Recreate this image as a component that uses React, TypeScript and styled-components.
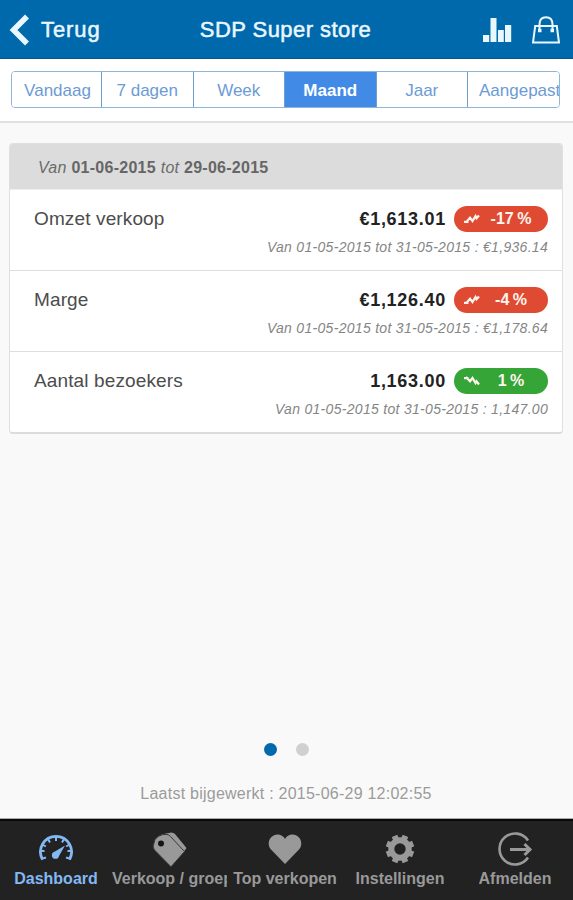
import React from 'react';
import styled, { createGlobalStyle } from 'styled-components';

const GlobalStyle = createGlobalStyle`
  *, *::before, *::after { box-sizing: border-box; }
  body { margin: 0; font-family: "Liberation Sans", Arial, sans-serif; background: #f9f9f9; }
`;

const Screen = styled.div`
  display: flex;
  flex-direction: column;
  height: 900px;
  width: 573px;
  overflow: hidden;
  background: #f9f9f9;
`;

const Header = styled.header`
  display: grid;
  grid-template-columns: 1fr auto 1fr;
  align-items: center;
  height: 59px;
  padding: 1px 13px 0 9px;
  background: #0069ab;
  border-bottom: 1px solid #07578a;
  color: #e9f7ff;
  flex: none;
`;

const BackButton = styled.button`
  display: flex;
  align-items: center;
  gap: 12px;
  padding: 0;
  border: 0;
  background: none;
  color: inherit;
  font: 22px "Liberation Sans", Arial, sans-serif;
  letter-spacing: 0.9px;
  -webkit-text-stroke: 0.5px currentColor;
`;

const Title = styled.h1`
  margin: 0 0 0 2px;
  font-size: 22px;
  font-weight: 400;
  letter-spacing: 0.44px;
  -webkit-text-stroke: 0.5px currentColor;
`;

const Actions = styled.div`
  display: flex;
  justify-content: flex-end;
  align-items: center;
  gap: 20px;
`;

const FilterBar = styled.div`
  height: 64px;
  flex: none;
  padding: 12px 13px 0 11px;
  background: #fff;
  border-bottom: 2px solid #e0e0e0;
`;

const Segments = styled.div`
  display: grid;
  grid-template-columns: 89px repeat(4, 91.5px) minmax(0, 1fr);
  height: 37px;
  border: 1px solid #8fb5d8;
  border-radius: 4px;
  overflow: hidden;
`;

const Segment = styled.button<{ $active?: boolean; $overflowing?: boolean }>`
  padding: 2px 0 0 ${p => (p.$overflowing ? '11px' : '0')};
  border: 0;
  border-left: 1px solid #6d9fd0;
  background: ${p => (p.$active ? '#418be6' : '#fff')};
  color: ${p => (p.$active ? '#fff' : '#6c9bd6')};
  font: ${p => (p.$active ? 700 : 400)} 17px "Liberation Sans", Arial, sans-serif;
  text-align: ${p => (p.$overflowing ? 'left' : 'center')};
  white-space: nowrap;
  overflow: hidden;
  &:first-child { border-left: 0; padding-left: 2px; }
`;

const Content = styled.main`
  display: flex;
  flex-direction: column;
  flex: 1;
  padding: 20px 10px 0 9px;
`;

const Card = styled.section`
  height: 291px;
  border: 1px solid #e0e0e0;
  border-bottom: 2px solid #dcdcdc;
  border-radius: 4px;
  overflow: hidden;
  background: #fff;
`;

const Period = styled.div`
  height: 45px;
  padding-left: 28px;
  background: #dcdcdc;
  color: #6b6b6b;
  font-size: 16px;
  font-style: italic;
  line-height: 48px;
  letter-spacing: 0.27px;
  b { font-style: normal; color: #666; }
`;

const MetricRow = styled.div`
  display: grid;
  grid-template-columns: 1fr auto 94px;
  grid-template-rows: 26px 24px;
  column-gap: 8px;
  align-items: center;
  height: 81px;
  padding: 16px 14px 0 24px;
  border-top: 1px solid #dedede;
  &:nth-child(2) { border-top-color: #eee; }
`;

const MetricName = styled.span`
  color: #4c4c4c;
  font-size: 19px;
  letter-spacing: 0.13px;
`;

const Amount = styled.strong`
  color: #222;
  font-size: 18px;
  letter-spacing: 0.72px;
`;

const Badge = styled.span<{ $up?: boolean }>`
  display: grid;
  grid-template-columns: 34px 46px;
  align-items: center;
  height: 26px;
  border-radius: 13px;
  background: ${p => (p.$up ? '#34a536' : '#df4b32')};
  color: #fff4ef;
  font-size: 16px;
  font-weight: 700;
  word-spacing: -1px;
  text-align: center;
  svg { margin-left: 9px; }
`;

const Comparison = styled.em`
  grid-column: 1 / -1;
  padding-top: 5px;
  color: #858585;
  font-size: 14px;
  letter-spacing: 0.3px;
  text-align: right;
`;

const Pager = styled.div`
  display: flex;
  justify-content: center;
  gap: 19px;
  margin-top: auto;
`;

const Dot = styled.span<{ $active?: boolean }>`
  width: 13px;
  height: 13px;
  border-radius: 50%;
  background: ${p => (p.$active ? '#006aad' : '#d0d0d0')};
`;

const Updated = styled.p`
  margin: 28px 0 15px;
  color: #9b9b9b;
  font-size: 16px;
  line-height: 20px;
  letter-spacing: 0.24px;
  text-align: center;
`;

const TabBar = styled.nav`
  display: grid;
  grid-template-columns: 112px 115px 116px 114px 116px;
  height: 81px;
  flex: none;
  background: #222;
  border-top: 2px solid #090909;
  box-shadow: 0 -1px 0 #aaa;
`;

const Tab = styled.button<{ $active?: boolean; $clipped?: boolean }>`
  display: flex;
  flex-direction: column;
  align-items: center;
  min-width: 0;
  padding: 9px 0 0;
  border: 0;
  background: none;
  color: ${p => (p.$active ? '#83b8f2' : '#999')};
  font: 700 16px "Liberation Sans", Arial, sans-serif;
  line-height: 20px;
  svg { height: 38px; flex: none; margin-bottom: 1px; }
  span {
    width: ${p => (p.$clipped ? '100%' : 'auto')};
    overflow: hidden;
    white-space: nowrap;
    text-align: left;
  }
`;

const BackIcon = () => (
  <svg width="20" height="32" viewBox="0 0 20 32" fill="none" stroke="currentColor" strokeWidth="5.500">
    <path d="M18 2.500 4.500 16 18 29.500" />
  </svg>
);

const BarsIcon = () => (
  <svg width="29" height="26" viewBox="0 0 29 26" fill="currentColor">
    <path d="M0 18h6.200v7H0zM7.500 1H13.500v24H7.500zM15 13h5.800v12H15zM22 8h6.200v17H22z" />
  </svg>
);

const BagIcon = () => (
  <svg width="28" height="28" viewBox="0 0 28 28" fill="none" stroke="currentColor" strokeWidth="2">
    <path d="M3.200 10h21.600L27 26.500H1z" />
    <path d="M7.500 15V8.500C7.500 4 10 1.200 14 1.200s6.500 2.800 6.500 7.300V15" />
    <path d="M6 14.500h3.500M18.500 14.500h3.500" strokeWidth="3.500" />
  </svg>
);

const TrendIcon = ({ up }: { up?: boolean }) => (
  <svg width="17" height="12" viewBox="0 0 17 12" fill="none" stroke="currentColor" strokeWidth="2.200">
    {up ? (
      <path d="M1 3.200h4.500M3 2l4 4.200L9.500 3l3 5 1-1.800L16 9.500" />
    ) : (
      <path d="M1 8.800h4.500M3 9.500l4-4.700L9.500 8l3-5 1 2.200L16 2.500" />
    )}
  </svg>
);

const GaugeIcon = () => (
  <svg width="38" viewBox="0 0 38 38" fill="none" stroke="currentColor">
    <path d="M5.500 29.500A15.500 15.500 0 1 1 32.500 29.500" strokeWidth="2.800" />
    <path d="M3.500 21h4M34.500 21h-4M19 7v4M11 9l2 3.500M27 9l-2 3.500M5.500 14.500l3.300 2M32.500 14.500l-3.300 2M4 29l5-1.500M34 29l-5-1.500" strokeWidth="2" />
    <path d="M28 15.500 22 26a3.600 3.600 0 1 1-4.500-4.200z" fill="currentColor" stroke="none" />
  </svg>
);

const TagsIcon = () => (
  <svg width="36" viewBox="0 0 36 38">
    <path d="M9 4.500 19.500 2.500Q21.500 2.500 23 4L34.500 18 30.500 23.500 16 8z" fill="currentColor" />
    <path d="M3 9.500Q6 5.500 11 4.500L15 4.500Q17 4.700 18.500 6.500L32.500 21.500 19 36.800 2.500 20Q1 18 1.200 16z" fill="currentColor" stroke="#3a3a3a" strokeWidth="1" />
    <circle cx="9" cy="13.500" r="3" fill="#151515" />
  </svg>
);

const HeartIcon = () => (
  <svg width="34" viewBox="0 0 34 38" fill="currentColor">
    <path d="M17 34 3 19.500C-1 15 .5 8 5.500 5.500 10 3.500 15 5 17 9c2-4 7-5.500 11.500-3.500C33.500 8 35 15 31 19.500z" />
  </svg>
);

const GearIcon = () => (
  <svg width="32" viewBox="0 0 32 38" fill="none" stroke="currentColor">
    <circle cx="16" cy="19" r="8.700" strokeWidth="6" />
    <g strokeWidth="6">
      {[22.5, 67.5, 112.5, 157.5, 202.5, 247.5, 292.5, 337.5].map(a => (
        <path key={a} d="M16 8.500V4.800" transform={`rotate(${a} 16 19)`} />
      ))}
    </g>
  </svg>
);

const ExitIcon = () => (
  <svg width="38" viewBox="0 0 38 38" fill="none" stroke="currentColor" strokeWidth="2.600">
    <path d="M32 10.500A15.500 15.500 0 1 0 32 27.500" />
    <path d="M14 19.500h20M28.500 14l5.500 5.500-5.500 5.500" strokeWidth="3" />
  </svg>
);

const segments = ['Vandaag', '7 dagen', 'Week', 'Maand', 'Jaar', 'Aangepast'];

const metrics = [
  { name: 'Omzet verkoop', amount: '€1,613.01', change: '-17 %', previous: '€1,936.14', up: false },
  { name: 'Marge', amount: '€1,126.40', change: '-4 %', previous: '€1,178.64', up: false },
  { name: 'Aantal bezoekers', amount: '1,163.00', change: '1 %', previous: '1,147.00', up: true },
];

const tabs = [
  { label: 'Dashboard', icon: <GaugeIcon />, active: true },
  { label: 'Verkoop / groepen', icon: <TagsIcon />, clipped: true },
  { label: 'Top verkopen', icon: <HeartIcon /> },
  { label: 'Instellingen', icon: <GearIcon /> },
  { label: 'Afmelden', icon: <ExitIcon /> },
];

export default function App() {
  return (
    <>
      <GlobalStyle />
      <Screen>
        <Header>
          <BackButton><BackIcon />Terug</BackButton>
          <Title>SDP Super store</Title>
          <Actions><BarsIcon /><BagIcon /></Actions>
        </Header>
        <FilterBar>
          <Segments>
            {segments.map(s => (
              <Segment key={s} $active={s === 'Maand'} $overflowing={s === 'Aangepast'}>{s}</Segment>
            ))}
          </Segments>
        </FilterBar>
        <Content>
          <Card>
            <Period>Van <b>01-06-2015</b> tot <b>29-06-2015</b></Period>
            {metrics.map(m => (
              <MetricRow key={m.name}>
                <MetricName>{m.name}</MetricName>
                <Amount>{m.amount}</Amount>
                <Badge $up={m.up}><TrendIcon up={m.up} />{m.change}</Badge>
                <Comparison>Van 01-05-2015 tot 31-05-2015 : {m.previous}</Comparison>
              </MetricRow>
            ))}
          </Card>
          <Pager><Dot $active /><Dot /></Pager>
          <Updated>Laatst bijgewerkt : 2015-06-29 12:02:55</Updated>
        </Content>
        <TabBar>
          {tabs.map(t => (
            <Tab key={t.label} $active={t.active} $clipped={t.clipped}>
              {t.icon}
              <span>{t.label}</span>
            </Tab>
          ))}
        </TabBar>
      </Screen>
    </>
  );
}
